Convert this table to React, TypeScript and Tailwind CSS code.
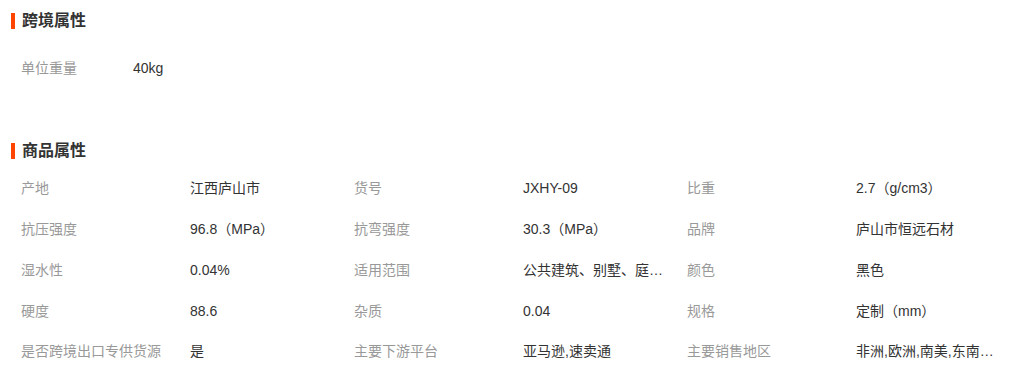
const crossBorder = [{ label: "单位重量", value: "40kg" }];

const productAttrs = [
  { label: "产地", value: "江西庐山市" },
  { label: "货号", value: "JXHY-09" },
  { label: "比重", value: "2.7（g/cm3）" },
  { label: "抗压强度", value: "96.8（MPa）" },
  { label: "抗弯强度", value: "30.3（MPa）" },
  { label: "品牌", value: "庐山市恒远石材" },
  { label: "湿水性", value: "0.04%" },
  { label: "适用范围", value: "公共建筑、别墅、庭院、广场" },
  { label: "颜色", value: "黑色" },
  { label: "硬度", value: "88.6" },
  { label: "杂质", value: "0.04" },
  { label: "规格", value: "定制（mm）" },
  { label: "是否跨境出口专供货源", value: "是" },
  { label: "主要下游平台", value: "亚马逊,速卖通" },
  { label: "主要销售地区", value: "非洲,欧洲,南美,东南亚,北美" },
];

function SectionTitle({ text }: { text: string }) {
  return (
    <div className="flex h-10 items-center pl-[11px]">
      <span className="h-4 w-1 bg-[#ff4400]" />
      <h3 className="ml-[7px] text-base font-bold leading-none text-[#333]">{text}</h3>
    </div>
  );
}

export default function App() {
  return (
    <div
      className="h-[377px] w-[1028px] overflow-hidden bg-white text-sm"
      style={{ fontFamily: '"Liberation Sans", "Noto Sans CJK SC", sans-serif' }}
    >
      {/* 跨境属性 */}
      <div className="pt-px">
        <SectionTitle text="跨境属性" />
      </div>
      <div className="mt-[7px] grid grid-cols-[112px_200px] pl-[21px]">
        {crossBorder.map((item) => (
          <div key={item.label} className="contents">
            <div className="flex h-10 items-center text-[#999]">{item.label}</div>
            <div className="flex h-10 items-center text-[#333]">{item.value}</div>
          </div>
        ))}
      </div>

      {/* 商品属性 */}
      <div className="mt-[43px]">
        <SectionTitle text="商品属性" />
        <div className="-mt-[3px] grid grid-cols-[169px_164px_169px_164px_169px_164px] pl-[21px]">
          {productAttrs.map((item) => (
            <div key={item.label} className="contents">
              <div className="flex h-[40.75px] items-center whitespace-nowrap text-[#999]">
                {item.label}
              </div>
              <div className="flex h-[40.75px] items-center text-[#333]">
                <span className="block w-[142px] truncate">{item.value}</span>
              </div>
            </div>
          ))}
        </div>
      </div>
    </div>
  );
}
